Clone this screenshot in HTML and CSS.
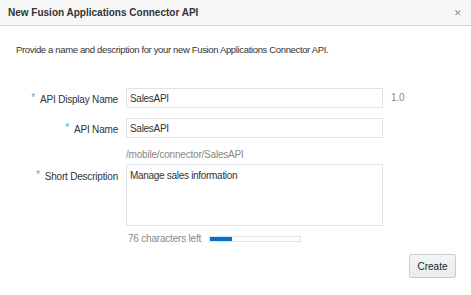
FILE: index.html
```html
<!DOCTYPE html>
<html lang="en">
<head>
  <meta charset="UTF-8">
  <meta name="viewport" content="width=device-width, initial-scale=1.0">
  <title>New Fusion Applications Connector API</title>
  <link rel="stylesheet" href="styles.css">
</head>
<body>
  <div class="dialog">
    <div class="dialog-header">
      <span class="dialog-title">New Fusion Applications Connector API</span>
      <span class="close-button">&#x2715;</span>
    </div>
    <div class="dialog-body">
      <p class="intro">Provide a name and description for your new Fusion Applications Connector API.</p>

      <div class="form">
        <label class="field-label" for="displayName"><span class="required">*</span>API Display Name</label>
        <input class="text-input" type="text" id="displayName" value="SalesAPI">
        <span class="hint version">1.0</span>

        <label class="field-label" for="apiName"><span class="required">*</span>API Name</label>
        <div class="field-stack">
          <input class="text-input" type="text" id="apiName" value="SalesAPI">
          <span class="hint path">/mobile/connector/SalesAPI</span>
        </div>
        <span></span>

        <label class="field-label top" for="shortDesc"><span class="required">*</span>Short Description</label>
        <div class="field-stack">
          <textarea class="text-area" id="shortDesc">Manage sales information</textarea>
          <div class="char-count">
            <span class="hint">76 characters left</span>
            <div class="meter"><div class="meter-fill" style="width: 22px"></div></div>
          </div>
        </div>
        <span></span>
      </div>

      <div class="actions">
        <button class="create-button">Create</button>
      </div>
    </div>
  </div>
</body>
</html>
```

FILE: styles.css
```css
body {
  font-family: 'Liberation Sans', Arial, sans-serif;
  font-size: 10px;
  letter-spacing: -0.2px;
  color: #333;
  margin: 0;
  padding: 0;
  background-color: #fff;
}

.dialog {
  width: 471px;
  height: 295px;
  display: flex;
  flex-direction: column;
}

.dialog-header {
  height: 25px;
  background-color: #f7f7f7;
  border-bottom: 1px solid #c9d6e0;
  display: flex;
  align-items: center;
  justify-content: space-between;
  padding: 0 9px 0 8px;
}

.dialog-title {
  font-weight: bold;
  letter-spacing: 0;
  color: #333;
}

.close-button {
  color: #888;
  font-size: 9px;
}

.dialog-body {
  padding: 0 15px 0 16px;
}

.intro {
  margin: 18px 0 0 0;
  font-size: 9.5px;
  letter-spacing: -0.35px;
  line-height: 12px;
}

.form {
  display: grid;
  grid-template-columns: 102px 257px auto;
  column-gap: 8px;
  row-gap: 8px;
  margin-top: 32px;
  align-items: start;
}

.field-label {
  text-align: right;
  line-height: 20px;
  white-space: nowrap;
}

.field-label.top {
  line-height: 12px;
  padding-top: 5px;
}

.required {
  color: #5b9bd5;
  font-size: 10px;
  vertical-align: 2px;
  margin-right: 5px;
}

.text-input {
  box-sizing: border-box;
  width: 257px;
  height: 20px;
  border: 1px solid #dde3e6;
  padding: 0 3px;
  margin: 0;
  font-family: inherit;
  font-size: 10px;
  letter-spacing: -0.3px;
  color: #333;
}

.field-stack {
  display: flex;
  flex-direction: column;
}

.hint {
  color: #888;
  line-height: 20px;
}

.version {
  color: #8a8a8a;
}

.path {
  line-height: 12px;
  margin-top: 11px;
  margin-bottom: -5px;
}

.text-area {
  box-sizing: border-box;
  width: 257px;
  height: 62px;
  border: 1px solid #dde3e6;
  padding: 5px 3px;
  margin: 0;
  font-family: inherit;
  font-size: 10px;
  letter-spacing: -0.3px;
  line-height: 12px;
  color: #333;
  resize: none;
}

.char-count {
  display: flex;
  align-items: center;
  gap: 8px;
  padding-left: 2px;
  margin-top: 6px;
}

.char-count .hint {
  line-height: 14px;
}

.meter {
  width: 90px;
  height: 4px;
  border: 1px solid #dde3e6;
  background-color: #fff;
}

.meter-fill {
  height: 100%;
  background-color: #0572ce;
}

.actions {
  display: flex;
  justify-content: flex-end;
  margin-top: 8px;
}

.create-button {
  width: 47px;
  height: 24px;
  background: linear-gradient(#f3f5f6, #e9edef);
  border: 1px solid #c4ced6;
  border-radius: 2px;
  font-family: inherit;
  font-size: 10px;
  letter-spacing: 0;
  color: #222;
  padding: 0;
}
```
